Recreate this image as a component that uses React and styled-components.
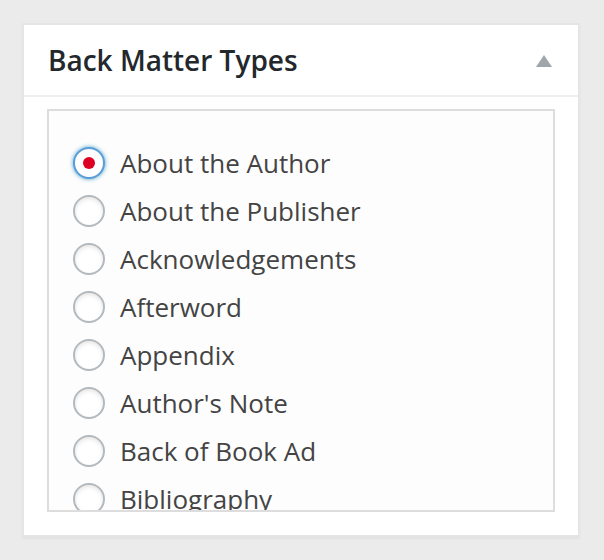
import React, { useState } from "react";
import styled, { createGlobalStyle } from "styled-components";

const GlobalStyle = createGlobalStyle`
  html, body {
    margin: 0;
    padding: 0;
    background: #ebebeb;
    font-family: "Open Sans", "Noto Sans", sans-serif;
  }
`;

const Page = styled.div`
  padding: 23px 24px 22px 22px;
  height: 560px;
  box-sizing: border-box;
`;

const Postbox = styled.div`
  width: 558px;
  height: 514px;
  box-sizing: border-box;
  background: #fff;
  border: 2px solid #e5e5e5;
  box-shadow: 0 2px 2px rgba(0, 0, 0, 0.04);
  display: flex;
  flex-direction: column;
`;

const Header = styled.div`
  height: 70px;
  flex-shrink: 0;
  display: flex;
  align-items: center;
  justify-content: space-between;
  padding: 0 26px 0 24px;
  border-bottom: 2px solid #eeeeee;

  h2 {
    margin: 0;
    font-size: 28px;
    font-weight: 600;
    color: #23282d;
  }
`;

const Toggle = styled.span`
  width: 0;
  height: 0;
  border-left: 8px solid transparent;
  border-right: 8px solid transparent;
  border-bottom: 12px solid #a0a5aa;
  margin-top: 2px;
`;

const Inside = styled.div`
  flex: 1;
  min-height: 0;
  padding: 12px 23px 23px 23px;
  display: flex;
`;

const Checklist = styled.ul`
  flex: 1;
  min-height: 0;
  margin: 0;
  list-style: none;
  box-sizing: border-box;
  border: 2px solid #dddddd;
  background: #fdfdfd;
  overflow: hidden;
  padding: 28px 24px 0;
`;

const Item = styled.li`
  height: 48px;
  display: flex;
  align-items: center;
  gap: 15px;
  font-size: 26px;
  color: #444;
  cursor: pointer;
`;

const Radio = styled.span`
  width: 32px;
  height: 32px;
  box-sizing: border-box;
  border-radius: 50%;
  border: 2px solid ${(p) => (p.$focus ? "#5b9dd9" : "#b4b9be")};
  background: #fff;
  box-shadow: ${(p) =>
    p.$focus
      ? "0 0 4px rgba(30, 140, 190, 0.8)"
      : "inset 0 2px 4px rgba(0, 0, 0, 0.1)"};
  display: flex;
  align-items: center;
  justify-content: center;
  flex-shrink: 0;

  &::after {
    content: "";
    width: 12px;
    height: 12px;
    border-radius: 50%;
    background: #dd0022;
    display: ${(p) => (p.$checked ? "block" : "none")};
  }
`;

const types = [
  "About the Author",
  "About the Publisher",
  "Acknowledgements",
  "Afterword",
  "Appendix",
  "Author's Note",
  "Back of Book Ad",
  "Bibliography",
];

export default function App() {
  const [selected, setSelected] = useState(types[0]);
  return (
    <Page>
      <GlobalStyle />
      <Postbox>
        <Header>
          <h2>Back Matter Types</h2>
          <Toggle />
        </Header>
        <Inside>
          <Checklist>
            {types.map((t) => (
              <Item key={t} onClick={() => setSelected(t)}>
                <Radio $checked={selected === t} $focus={selected === t} />
                {t}
              </Item>
            ))}
          </Checklist>
        </Inside>
      </Postbox>
    </Page>
  );
}
